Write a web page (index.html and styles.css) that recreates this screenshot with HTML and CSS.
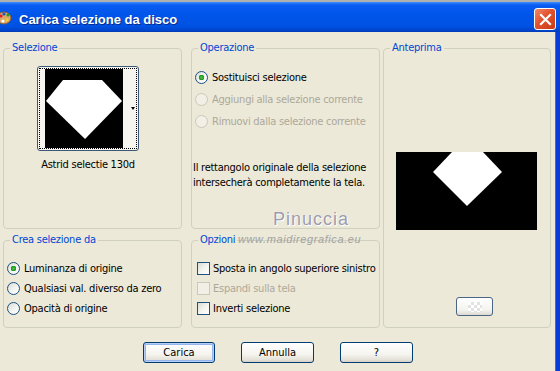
FILE: index.html
```html
<!DOCTYPE html>
<html lang="it">
<head>
  <meta charset="UTF-8">
  <title>Carica selezione da disco</title>
  <link rel="stylesheet" href="styles.css">
</head>
<body>
  <div class="window">
    <!-- barra del titolo -->
    <div class="titlebar">
      <svg class="app-icon" width="13" height="18" viewBox="0 0 13 18">
        <ellipse cx="5" cy="9" rx="7" ry="6" fill="#d9a86a" stroke="#8a5a2a" stroke-width="1"/>
        <circle cx="2" cy="7" r="1.6" fill="#e02020"/>
        <circle cx="5" cy="5" r="1.6" fill="#2050e0"/>
        <circle cx="9" cy="6" r="1.6" fill="#20a020"/>
        <circle cx="4" cy="12" r="1.6" fill="#ffffff"/>
        <circle cx="8" cy="11" r="1.4" fill="#f0d020"/>
      </svg>
      <span class="title">Carica selezione da disco</span>
      <span class="close-btn">
        <svg width="13" height="13" viewBox="0 0 13 13">
          <path d="M2 2 L11 11 M11 2 L2 11" stroke="#fff" stroke-width="2.2" stroke-linecap="square"/>
        </svg>
      </span>
    </div>

    <div class="dialog">
      <div class="groups">
        <fieldset class="group group-sel">
          <legend>Selezione</legend>
          <div class="sel-body">
            <div class="thumb">
              <div class="thumb-focus">
                <svg class="thumb-img" width="78" height="79" viewBox="0 0 78 79">
                  <rect width="78" height="79" fill="#000"/>
                  <polygon points="18,11 57,11 77,32 40,70 1,32" fill="#fff"/>
                </svg>
                <span class="thumb-arrow"></span>
              </div>
            </div>
            <div class="thumb-name">Astrid selectie 130d</div>
          </div>
        </fieldset>

        <fieldset class="group group-op">
          <legend>Operazione</legend>
          <div class="op-body">
            <label class="row row-22"><input type="radio" name="op" class="xp-radio" checked> Sostituisci selezione</label>
            <label class="row row-22 disabled"><input type="radio" name="op" class="xp-radio" disabled> Aggiungi alla selezione corrente</label>
            <label class="row row-22 disabled"><input type="radio" name="op" class="xp-radio" disabled> Rimuovi dalla selezione corrente</label>
            <p class="op-desc">Il rettangolo originale della selezione<br>intersecherà completamente la tela.</p>
          </div>
        </fieldset>

        <fieldset class="group group-preview">
          <legend>Anteprima</legend>
          <div class="preview-body">
            <svg class="preview-img" width="141" height="78" viewBox="0 0 141 78">
              <rect width="141" height="78" fill="#000"/>
              <polygon points="56,0 87,0 106,20 71,54 37,20" fill="#fff"/>
            </svg>
            <span class="small-btn"><span class="checker"></span></span>
          </div>
        </fieldset>

        <fieldset class="group group-create">
          <legend>Crea selezione da</legend>
          <div class="create-body">
            <label class="row"><input type="radio" name="src" class="xp-radio" checked> Luminanza di origine</label>
            <label class="row"><input type="radio" name="src" class="xp-radio"> Qualsiasi val. diverso da zero</label>
            <label class="row"><input type="radio" name="src" class="xp-radio"> Opacità di origine</label>
          </div>
        </fieldset>

        <fieldset class="group group-opts">
          <legend>Opzioni</legend>
          <div class="opts-body">
            <label class="row"><input type="checkbox" class="xp-check"> Sposta in angolo superiore sinistro</label>
            <label class="row disabled"><input type="checkbox" class="xp-check" disabled> Espandi sulla tela</label>
            <label class="row"><input type="checkbox" class="xp-check"> Inverti selezione</label>
          </div>
        </fieldset>
      </div>

      <!-- filigrana -->
      <div class="watermark">
        <div class="wm-name">Pinuccia</div>
        <div class="wm-site">www.maidiregrafica.eu</div>
      </div>

      <div class="buttons">
        <button class="xp-btn default">Carica</button>
        <button class="xp-btn">Annulla</button>
        <button class="xp-btn">?</button>
      </div>
    </div>
  </div>
</body>
</html>
```

FILE: styles.css
```css
/* pagina */
body {
  margin: 0;
  background: #ece9d8;
  font-family: "DejaVu Sans Condensed", "DejaVu Sans", sans-serif;
  font-stretch: condensed;
  font-size: 11px;
  letter-spacing: -0.25px;
  color: #000;
}

.window {
  width: 560px;
  height: 371px;
  overflow: hidden;
}

/* barra del titolo */
.titlebar {
  height: 30px;
  border-top: 2px solid #b0b0b0;
  background: linear-gradient(#3d8dfc 0, #0a5cf2 3px, #0055ea 12px, #0052e4 24px, #0043c8 29px, #0036b0 30px);
  display: flex;
  align-items: center;
  position: relative;
}

.app-icon {
  margin-left: -1px;
  margin-top: 2px;
}

.title {
  margin-left: 7px;
  margin-top: 5px;
  font-family: "Liberation Sans", Arial, sans-serif;
  font-stretch: normal;
  font-weight: bold;
  font-size: 13px;
  letter-spacing: 0;
  color: #fff;
  text-shadow: 1px 1px 0 #0a2a8a;
}

.close-btn {
  margin-left: auto;
  margin-right: 4px;
  margin-top: 4px;
  width: 20px;
  height: 20px;
  border: 1px solid #fff;
  border-radius: 3px;
  background: linear-gradient(135deg, #f08a6a 0, #e2522d 45%, #c93a17 100%);
  display: flex;
  align-items: center;
  justify-content: center;
}

/* corpo della finestra */
.dialog {
  position: relative;
  height: 339px;
  box-sizing: border-box;
  padding: 9px 3px 0 3px;
  border-right: 4px solid #0b3bd6;
  box-shadow: inset -1px 0 0 #2f6ef0;
}

.groups {
  display: grid;
  grid-template-columns: 188px 192px 168px;
  grid-template-rows: 188px 95px;
  row-gap: 4px;
}

.group {
  margin: 0;
  padding: 0;
  min-width: 0;
  border: 1px solid #d0d0bf;
  border-radius: 4px;
  box-sizing: border-box;
}

.group legend {
  margin-left: 6px;
  padding: 0 2px;
  line-height: 14px;
  color: #0046d5;
}

.group-sel,
.group-create {
  width: 179px;
}

.group-op,
.group-opts {
  width: 189px;
}

.group-preview {
  grid-column: 3;
  grid-row: 1 / span 2;
}

.group-create {
  grid-column: 1;
  grid-row: 2;
}

/* selezione */
.sel-body {
  display: flex;
  flex-direction: column;
  align-items: center;
  padding-right: 9px;
}

.thumb {
  margin-top: 11px;
  border: 1px solid #3b5776;
  border-radius: 3px;
  padding: 1px;
  background: #f6f5f0;
}

.thumb-focus {
  border: 1px dotted #000;
  display: flex;
  width: 96px;
}

.thumb-img {
  display: block;
  margin-left: 5px;
}

.thumb-arrow {
  margin: 38px 0 0 8px;
  width: 0;
  height: 0;
  border-left: 2px solid transparent;
  border-right: 2px solid transparent;
  border-top: 3px solid #000;
}

.thumb-name {
  margin-top: 7px;
  line-height: 14px;
}

/* righe con radio e caselle */
.row {
  display: flex;
  align-items: center;
  gap: 4px;
  height: 20px;
  white-space: nowrap;
}

.row-22 {
  height: 22px;
}

.row.disabled {
  color: #aca899;
}

.xp-radio,
.xp-check {
  appearance: none;
  margin: 0;
  width: 13px;
  height: 13px;
  flex: none;
  border: 1px solid #1c5180;
  background: linear-gradient(135deg, #dcdcd5 0, #f4f4f1 55%, #fff 100%);
  box-sizing: border-box;
}

.xp-radio {
  border-radius: 50%;
}

.xp-radio:checked {
  background: radial-gradient(circle, #55c255 0, #21a121 2px, #1b8a1b 2.6px, transparent 3px),
              linear-gradient(135deg, #dcdcd5 0, #f4f4f1 55%, #fff 100%);
}

.xp-radio:disabled,
.xp-check:disabled {
  border-color: #cac8bb;
  background: #f2f0e6;
}

.op-body {
  padding: 11px 0 0 3px;
}

.op-desc {
  margin: 28px 0 0 -2px;
  line-height: 15px;
}

.create-body {
  padding: 11px 0 0 3px;
}

.opts-body {
  padding: 11px 0 0 5px;
}

.opts-body .row {
  gap: 3px;
}

/* anteprima */
.preview-body {
  display: flex;
  flex-direction: column;
  align-items: center;
}

.preview-img {
  display: block;
  margin-top: 97px;
  margin-right: 1px;
}

.small-btn {
  align-self: flex-start;
  margin: 67px 0 0 72px;
  width: 37px;
  height: 19px;
  box-sizing: border-box;
  border: 1px solid #4a6585;
  border-radius: 3px;
  background: linear-gradient(#ffffff, #f3f3ef 70%, #dcdad2);
  display: flex;
  align-items: center;
  justify-content: center;
}

.checker {
  width: 14px;
  height: 10px;
  background: conic-gradient(#e2e2e2 25%, #ffffff 0 50%, #e2e2e2 0 75%, #ffffff 0);
  background-size: 6px 6px;
}

/* filigrana */
.watermark {
  position: absolute;
  left: 238px;
  top: 176px;
  font-family: "Liberation Sans", Arial, sans-serif;
  font-stretch: normal;
  letter-spacing: 0;
  color: #9c9cae;
  pointer-events: none;
}

.wm-name {
  margin-left: 35px;
  font-size: 18px;
  letter-spacing: 1px;
  line-height: 22px;
  text-shadow: 0 0 1px #fff, 1px 1px 0 #fff;
}

.wm-site {
  margin-top: 2px;
  font-size: 11px;
  font-style: italic;
  letter-spacing: 0.6px;
  line-height: 14px;
  color: #a2a2a2;
}

/* pulsanti */
.buttons {
  display: flex;
  justify-content: center;
  gap: 26px;
  margin-top: 14px;
}

.xp-btn {
  width: 73px;
  height: 21px;
  padding: 0;
  font: inherit;
  color: #000;
  border: 1px solid #003c74;
  border-radius: 3px;
  background: linear-gradient(#ffffff 0, #f5f4ef 60%, #e3e0d6 90%, #d6d0c5 100%);
}

.xp-btn.default {
  width: 72px;
  box-shadow: inset 0 0 0 1px #b8cef2, inset 0 0 0 2px #95b5ee;
}
```
